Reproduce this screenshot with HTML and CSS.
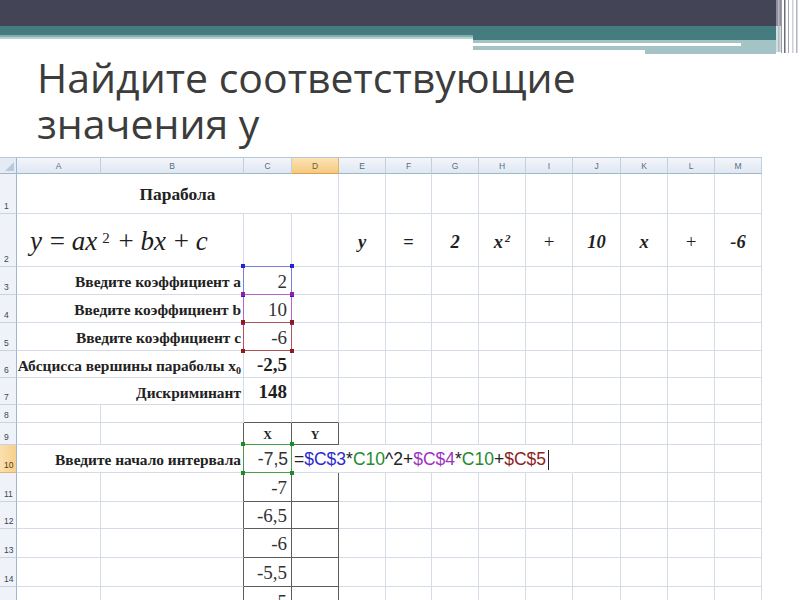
FILE: index.html
```html
<!DOCTYPE html>
<html lang="ru">
<head>
<meta charset="utf-8">
<title>Найдите соответствующие значения у</title>
<link rel="stylesheet" href="styles.css">
</head>
<body>
<div class="slide">
  <svg class="band" width="800" height="54" viewBox="0 0 800 54" aria-hidden="true">
    <rect x="0" y="0" width="776" height="26" fill="#434456"/>
    <rect x="0" y="26" width="776" height="9" fill="#457c80"/>
    <rect x="0" y="35" width="473" height="2" fill="#85adaf"/>
    <rect x="0" y="37" width="473" height="2" fill="#b7d0d1"/>
    <rect x="473" y="35" width="303" height="5" fill="#457c80"/>
    <rect x="473" y="40" width="303" height="10" fill="#a3c3c5"/>
    <rect x="473" y="43" width="268" height="3" fill="#ffffff"/>
    <rect x="645" y="50" width="131" height="4" fill="#a3c3c5"/>
    <rect x="776" y="0" width="5" height="26" fill="#8e8e9c"/>
    <rect x="776" y="26" width="5" height="26" fill="#cfe0e0"/>
    <rect x="778" y="0" width="1.5" height="52" fill="#b8b8c2"/>
    <rect x="781" y="0" width="1" height="53" fill="#9a9aa8"/>
    <rect x="784" y="0" width="1.5" height="53" fill="#6d6d7c"/>
    <rect x="788" y="0" width="1" height="53" fill="#a4a4b0"/>
    <rect x="792" y="0" width="1.5" height="53" fill="#cfcfd7"/>
    <rect x="796" y="0" width="1.5" height="53" fill="#b4b4bf"/>
  </svg>
  <h1 class="title"><span class="tl">Найдите соответствующие</span><span class="tl">значения у</span></h1>
  <div class="sheet">
    <div class="corner"></div><div class="ch">A</div><div class="ch">B</div><div class="ch">C</div><div class="ch sel">D</div><div class="ch">E</div><div class="ch">F</div><div class="ch">G</div><div class="ch">H</div><div class="ch">I</div><div class="ch">J</div><div class="ch">K</div><div class="ch">L</div><div class="ch">M</div>

    <div class="rh">1</div><div class="ttl s4">Парабола</div><div></div><div></div><div></div><div></div><div></div><div></div><div></div><div></div><div></div>

    <div class="rh">2</div><div class="fx s2"><i>y</i>&nbsp;=&nbsp;<i>ax</i><sup>2</sup>&nbsp;+&nbsp;<i>bx</i>&nbsp;+&nbsp;<i>c</i></div><div></div><div></div><div class="eq">y</div><div class="eq up">=</div><div class="eq">2</div><div class="eq">x<sup>2</sup></div><div class="eq up lt">+</div><div class="eq">10</div><div class="eq">x</div><div class="eq up lt">+</div><div class="eq">-6</div>

    <div class="rh">3</div><div class="lbl s2">Введите коэффициент a</div><div class="num ref r-blue">2</div><div></div><div></div><div></div><div></div><div></div><div></div><div></div><div></div><div></div><div></div>

    <div class="rh">4</div><div class="lbl s2">Введите коэффициент b</div><div class="num ref r-purple">10</div><div></div><div></div><div></div><div></div><div></div><div></div><div></div><div></div><div></div><div></div>

    <div class="rh">5</div><div class="lbl s2">Введите коэффициент c</div><div class="num ref r-red">-6</div><div></div><div></div><div></div><div></div><div></div><div></div><div></div><div></div><div></div><div></div>

    <div class="rh">6</div><div class="lbl s2">Абсцисса вершины параболы x<sub>0</sub></div><div class="num bold">-2,5</div><div></div><div></div><div></div><div></div><div></div><div></div><div></div><div></div><div></div><div></div>

    <div class="rh">7</div><div class="lbl s2">Дискриминант</div><div class="num bold">148</div><div></div><div></div><div></div><div></div><div></div><div></div><div></div><div></div><div></div><div></div>

    <div class="rh">8</div><div></div><div></div><div class="bb"></div><div class="bb"></div><div></div><div></div><div></div><div></div><div></div><div></div><div></div><div></div><div></div>

    <div class="rh">9</div><div></div><div class="br"></div><div class="bx hd">X</div><div class="bx hd">Y</div><div></div><div></div><div></div><div></div><div></div><div></div><div></div><div></div><div></div>

    <div class="rh sel">10</div><div class="lbl s2 br">Введите начало интервала</div><div class="num sans bx ref r-green">-7,5</div><div class="edit s6"><span class="k">=</span><span class="c-blue">$C$3</span><span class="k">*</span><span class="c-green">C10</span><span class="k">^2+</span><span class="c-purple">$C$4</span><span class="k">*</span><span class="c-green">C10</span><span class="k">+</span><span class="c-red">$C$5</span><span class="caret"></span></div><div></div><div></div><div></div><div></div>

    <div class="rh">11</div><div></div><div class="br"></div><div class="num bx">-7</div><div class="bx"></div><div></div><div></div><div></div><div></div><div></div><div></div><div></div><div></div><div></div>

    <div class="rh">12</div><div></div><div class="br"></div><div class="num bx">-6,5</div><div class="bx"></div><div></div><div></div><div></div><div></div><div></div><div></div><div></div><div></div><div></div>

    <div class="rh">13</div><div></div><div class="br"></div><div class="num bx">-6</div><div class="bx"></div><div></div><div></div><div></div><div></div><div></div><div></div><div></div><div></div><div></div>

    <div class="rh">14</div><div></div><div class="br"></div><div class="num bx">-5,5</div><div class="bx"></div><div></div><div></div><div></div><div></div><div></div><div></div><div></div><div></div><div></div>

    <div class="rh">15</div><div></div><div class="br"></div><div class="num bx">-5</div><div class="bx"></div><div></div><div></div><div></div><div></div><div></div><div></div><div></div><div></div><div></div>
  </div>
</div>
</body>
</html>
```
FILE: styles.css
```css
* { box-sizing: border-box; margin: 0; padding: 0; }
html, body { width: 800px; height: 600px; overflow: hidden; background: #fff; }
body { font-family: "Liberation Serif", "Times New Roman", serif; color: #222; }

.slide { width: 800px; height: 600px; display: flex; flex-direction: column; overflow: hidden; }
.band { display: block; flex: none; }

.title {
  flex: none;
  height: 103px;
  padding-left: 37px;
  display: flex;
  flex-direction: column;
  font-family: "Open Sans", "DejaVu Sans", sans-serif;
  font-weight: 400;
  font-size: 41px;
  color: #3c3c3c;
}
.tl { display: block; height: 46px; line-height: 46px; white-space: nowrap; }

.sheet {
  flex: none;
  display: grid;
  width: 762px;
  grid-template-columns: 17px 84px 143px 48px 47px 47px 46px 47px 47px 47px 48px 47px 47px 47px;
  grid-template-rows: 16px 40px 53px 28px 28px 28px 27px 27px 18px 22px 28px 29px 27px 29px 29px 29px;
  border-top: 1px solid #b7c7da;
}
.sheet > div {
  position: relative;
  display: flex;
  align-items: center;
  min-width: 0;
  white-space: nowrap;
  border-right: 1px solid #d5dce7;
  border-bottom: 1px solid #d5dce7;
}

.s2 { grid-column: span 2; }
.s4 { grid-column: span 4; }
.s6 { grid-column: span 6; }

/* headers */
.sheet > .corner {
  background: #e4ebf4;
  border-right-color: #9eb6ce;
  border-bottom-color: #9eb6ce;
}
.corner::after {
  content: "";
  position: absolute;
  right: 2px;
  bottom: 2px;
  border-left: 9px solid transparent;
  border-bottom: 9px solid #b9c8da;
}
.sheet > .ch {
  justify-content: center;
  background: linear-gradient(#f3f6fb, #dfe7f1);
  border-right-color: #c2cfdf;
  border-bottom-color: #9eb6ce;
  font-family: "Liberation Sans", Arial, sans-serif;
  font-size: 8.5px;
  color: #5b6b80;
}
.sheet > .ch.sel {
  background: linear-gradient(#fbe3b6, #f7c97f);
  border-right-color: #e0b26a;
  border-bottom-color: #d9a04a;
  color: #6a5a40;
}
.sheet > .rh {
  align-items: flex-end;
  padding: 0 0 2px 4px;
  background: #eff3f9;
  border-right-color: #9eb6ce;
  border-bottom-color: #c7d3e1;
  font-family: "Liberation Sans", Arial, sans-serif;
  font-size: 8.5px;
  color: #3d4450;
}
.sheet > .rh.sel {
  background: linear-gradient(90deg, #fbe0ae, #f8cf8c);
  border-bottom-color: #e2b470;
  color: #4a3a20;
}

/* content */
.ttl {
  justify-content: center;
  font-weight: 700;
  font-size: 17.4px;
  color: #222;
  padding-top: 2px;
}
.fx {
  padding-left: 13px;
  padding-top: 2px;
  font-size: 27px;
  color: #1e1e1e;
}
.fx i { padding-right: 1px; }
.fx sup { font-size: 15px; position: relative; top: -3px; vertical-align: top; margin-left: 4px; margin-right: 2px; }
.eq {
  justify-content: center;
  font-weight: 700;
  font-style: italic;
  font-size: 18.5px;
  color: #1e1e1e;
  padding-top: 4px;
}
.eq sup { font-size: 11px; vertical-align: top; position: relative; top: -4px; margin-left: 2px; }
.eq.up { font-style: normal; }
.eq.lt { font-weight: 400; font-size: 19px; }

.lbl {
  justify-content: flex-end;
  padding-right: 2px;
  font-weight: 700;
  font-size: 15.4px;
  color: #222;
  padding-top: 3px;
}
.lbl sub { font-size: 10px; position: relative; top: 5px; line-height: 0; }
.num {
  justify-content: flex-end;
  padding-right: 4px;
  padding-top: 2px;
  font-size: 19px;
  color: #333;
}
.num.bold { font-weight: 700; color: #1e1e1e; }
.num.sans {
  font-family: "Liberation Sans", Arial, sans-serif;
  font-size: 17.5px;
  padding-right: 3px;
}
.hd { justify-content: center; font-weight: 700; font-size: 12px; padding-top: 4px; }

/* bordered table */
.sheet > .bx { border-right-color: #5c5c5c; border-bottom-color: #5c5c5c; }
.sheet > .bb { border-bottom-color: #5c5c5c; }
.sheet > .br { border-right-color: #5c5c5c; }

/* reference highlight boxes */
.ref::after {
  content: "";
  position: absolute;
  left: -1px; top: -1px; right: -1px; bottom: -1px;
  border: 1px solid var(--rc);
}
.ref::before {
  content: "";
  position: absolute;
  left: -3px; top: -3px; right: -3px; bottom: -3px;
  z-index: 2;
  background:
    linear-gradient(var(--hc), var(--hc)) left top / 4px 4px no-repeat,
    linear-gradient(var(--hc), var(--hc)) right top / 4px 4px no-repeat,
    linear-gradient(var(--hc), var(--hc)) left bottom / 4px 4px no-repeat,
    linear-gradient(var(--hc), var(--hc)) right bottom / 4px 4px no-repeat;
}
.r-blue { --rc: #7d7ddc; --hc: #2323d4; }
.r-purple { --rc: #b866c8; --hc: #8e1fa6; }
.r-red { --rc: #b25252; --hc: #8a1c1c; }
.r-green { --rc: #47a047; --hc: #1f8a2a; }

/* in-cell formula editor */
.sheet > .edit {
  background: #fff;
  border-right-color: transparent;
  padding-left: 2px;
  padding-top: 2px;
  font-family: "Liberation Sans", Arial, sans-serif;
  font-size: 17.5px;
  z-index: 1;
}
.k { color: #222; }
.c-blue { color: #2b2bd0; }
.c-green { color: #1f8a2e; }
.c-purple { color: #a032c2; }
.c-red { color: #8c1f1f; }
.caret { display: inline-block; width: 1px; height: 20px; background: #222; margin-left: 2px; }
```
